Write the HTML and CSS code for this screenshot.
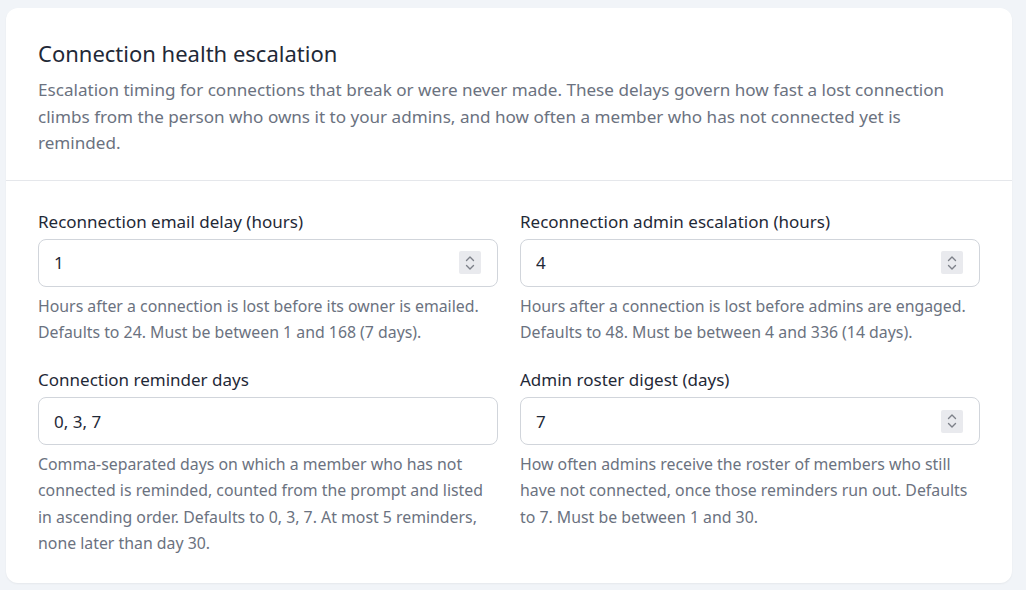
FILE: index.html
```html
<!DOCTYPE html>
<html lang="en">

<head>
    <meta charset="UTF-8">
    <meta name="viewport" content="width=device-width, initial-scale=1.0">
    <title>Connection health escalation</title>
    <link rel="stylesheet" href="styles.css">
</head>

<body>
    <div class="card">
        <div class="card-header">
            <h2>Connection health escalation</h2>
            <p>Escalation timing for connections that break or were never made. These delays govern how fast a lost
                connection climbs from the person who owns it to your admins, and how often a member who has not
                connected yet is reminded.</p>
        </div>

        <div class="card-body">
            <div class="field">
                <label for="email-delay">Reconnection email delay (hours)</label>
                <div class="input">
                    <input id="email-delay" type="text" value="1">
                    <span class="spin">
                        <svg width="12" height="18" viewBox="0 0 12 18" fill="none" stroke="#7d8189" stroke-width="1.4"
                            stroke-linecap="round" stroke-linejoin="round">
                            <path d="M2.5 6.5 6 3l3.5 3.5" />
                            <path d="M2.5 11.5 6 15l3.5-3.5" />
                        </svg>
                    </span>
                </div>
                <p class="help">Hours after a connection is lost before its owner is emailed. Defaults to 24. Must be
                    between 1 and 168 (7 days).</p>
            </div>

            <div class="field">
                <label for="admin-escalation">Reconnection admin escalation (hours)</label>
                <div class="input">
                    <input id="admin-escalation" type="text" value="4">
                    <span class="spin">
                        <svg width="12" height="18" viewBox="0 0 12 18" fill="none" stroke="#7d8189" stroke-width="1.4"
                            stroke-linecap="round" stroke-linejoin="round">
                            <path d="M2.5 6.5 6 3l3.5 3.5" />
                            <path d="M2.5 11.5 6 15l3.5-3.5" />
                        </svg>
                    </span>
                </div>
                <p class="help">Hours after a connection is lost before admins are engaged. Defaults to 48. Must be
                    between 4 and 336 (14 days).</p>
            </div>

            <div class="field">
                <label for="reminder-days">Connection reminder days</label>
                <div class="input">
                    <input id="reminder-days" type="text" value="0, 3, 7">
                </div>
                <p class="help">Comma-separated days on which a member who has not connected is reminded, counted from
                    the prompt and listed in ascending order. Defaults to 0, 3, 7. At most 5 reminders, none later than
                    day 30.</p>
            </div>

            <div class="field">
                <label for="roster-digest">Admin roster digest (days)</label>
                <div class="input">
                    <input id="roster-digest" type="text" value="7">
                    <span class="spin">
                        <svg width="12" height="18" viewBox="0 0 12 18" fill="none" stroke="#7d8189" stroke-width="1.4"
                            stroke-linecap="round" stroke-linejoin="round">
                            <path d="M2.5 6.5 6 3l3.5 3.5" />
                            <path d="M2.5 11.5 6 15l3.5-3.5" />
                        </svg>
                    </span>
                </div>
                <p class="help">How often admins receive the roster of members who still have not connected, once those
                    reminders run out. Defaults to 7. Must be between 1 and 30.</p>
            </div>
        </div>
    </div>
</body>

</html>
```

FILE: styles.css
```css
body {
    font-family: "Noto Sans", "Open Sans", sans-serif;
    background: #f1f4f8;
    margin: 0;
    padding: 8px 14px 8px 6px;
    color: #1f2937;
}

.card {
    background: #fff;
    border-radius: 12px;
    box-shadow: 0 1px 2px #0000000d;
}

.card-header {
    padding: 30px 32px 23px;
    border-bottom: 1px solid #e5e7eb;
}

.card-header h2 {
    margin: 0 0 9px;
    font-size: 22px;
    font-weight: 400;
    line-height: 30px;
    color: #1f2937;
}

.card-header p {
    margin: 0;
    font-size: 17.1px;
    line-height: 26.5px;
    color: #6b7280;
}

.card-body {
    display: grid;
    grid-template-columns: 1fr 1fr;
    column-gap: 22px;
    row-gap: 22px;
    padding: 28px 32px 27px;
}

.field label {
    display: block;
    font-size: 17px;
    line-height: 26px;
    color: #1f2937;
    margin-bottom: 4px;
}

.input {
    display: flex;
    align-items: center;
    height: 48px;
    box-sizing: border-box;
    border: 1px solid #d1d5db;
    border-radius: 8px;
    padding: 0 16px 0 15px;
}

.input input {
    flex: 1;
    min-width: 0;
    border: 0;
    outline: 0;
    padding: 0;
    background: transparent;
    font: inherit;
    font-size: 17px;
    color: #1f2937;
}

.spin {
    display: flex;
    align-items: center;
    justify-content: center;
    width: 22px;
    height: 23px;
    background: #e9eaee;
    border-radius: 2px;
}

.help {
    margin: 6px 0 0;
    font-size: 15.85px;
    line-height: 26.3px;
    color: #6b7280;
}
```
